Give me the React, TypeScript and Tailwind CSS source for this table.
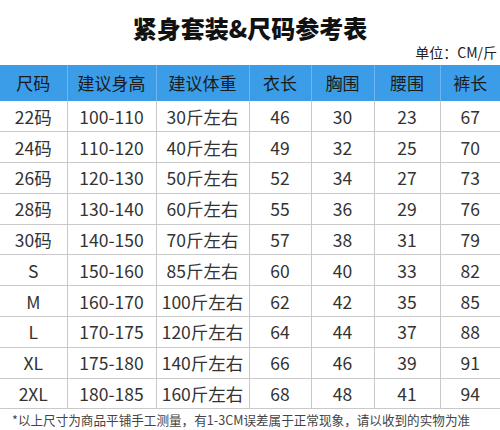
const headers = ["尺码", "建议身高", "建议体重", "衣长", "胸围", "腰围", "裤长"];
const widths = [67, 89, 93, 62, 63, 66, 60];

const rows = [
  ["22码", "100-110", "30斤左右", "46", "30", "23", "67"],
  ["24码", "110-120", "40斤左右", "49", "32", "25", "70"],
  ["26码", "120-130", "50斤左右", "52", "34", "27", "73"],
  ["28码", "130-140", "60斤左右", "55", "36", "29", "76"],
  ["30码", "140-150", "70斤左右", "57", "38", "31", "79"],
  ["S", "150-160", "85斤左右", "60", "40", "33", "82"],
  ["M", "160-170", "100斤左右", "62", "42", "35", "85"],
  ["L", "170-175", "120斤左右", "64", "44", "37", "88"],
  ["XL", "175-180", "140斤左右", "66", "46", "39", "91"],
  ["2XL", "180-185", "160斤左右", "68", "48", "41", "94"],
];

export default function App() {
  return (
    <div
      className="w-[500px] h-[430px] overflow-hidden bg-white text-[#333]"
      style={{ fontFamily: '"Noto Sans CJK SC", "Noto Sans", sans-serif' }}
    >
      <h1 className="pt-[13px] h-[43px] text-center text-[24px] leading-[30px] font-black text-[#111]">
        紧身套装&amp;尺码参考表
      </h1>
      <div className="h-[22px] pr-[3px] text-right text-[14px] leading-[18px] text-[#222]">
        单位：CM/斤
      </div>
      <table className="w-[500px] table-fixed border-collapse">
        <colgroup>
          {widths.map((w, i) => (
            <col key={i} style={{ width: w }} />
          ))}
        </colgroup>
        <thead>
          <tr className="h-[36px] bg-[#3b9de8]">
            {headers.map((h, i) => (
              <th
                key={h}
                className={
                  "p-0 text-center text-[17px] font-normal text-[#1a1a1a] border-[#6cb5ee] " +
                  (i < headers.length - 1 ? "border-r" : "")
                }
              >
                {h}
              </th>
            ))}
          </tr>
        </thead>
        <tbody>
          {rows.map((r) => (
            <tr key={r[0]} className="h-[30.8px] border-b border-[#c9c9c9]">
              {r.map((c, i) => (
                <td
                  key={i}
                  className={
                    "p-0 text-center text-[17.5px] leading-[29px] whitespace-nowrap border-[#c9c9c9] " +
                    (i < r.length - 1 ? "border-r" : "")
                  }
                >
                  {c}
                </td>
              ))}
            </tr>
          ))}
        </tbody>
      </table>
      <p className="pl-[12px] pt-[3px] text-[12.6px] leading-[16px] text-[#444] whitespace-nowrap">
        *以上尺寸为商品平铺手工测量，有1-3CM误差属于正常现象，请以收到的实物为准
      </p>
    </div>
  );
}
